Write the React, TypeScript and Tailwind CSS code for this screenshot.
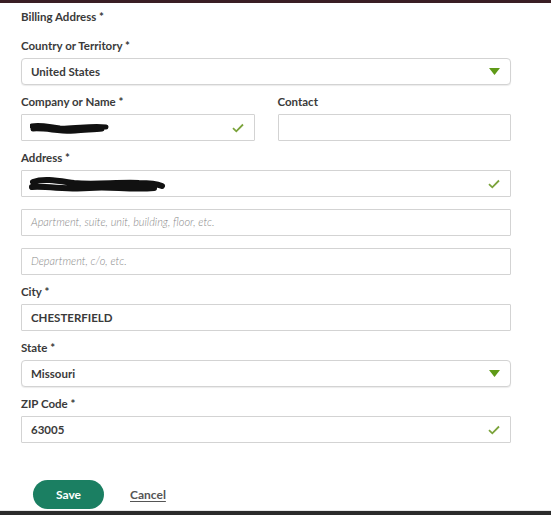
import * as React from 'react';

const font = { fontFamily: 'Lato, "Open Sans", "Liberation Sans", sans-serif' };

function Check() {
  return (
    <svg width="12" height="10" viewBox="0 0 12 10" className="shrink-0">
      <path d="M1 5.2 L4.3 8.3 L11 1.5" fill="none" stroke="#7ba33b" strokeWidth="1.8" />
    </svg>
  );
}

function Caret() {
  return (
    <svg width="11" height="7" viewBox="0 0 11 7" className="shrink-0">
      <path d="M0 0 H11 L5.5 7 Z" fill="#5f9a17" />
    </svg>
  );
}

function Label({ children }: { children: React.ReactNode }) {
  return <div className="text-[11.5px] leading-[14px] font-bold text-[#3a3a3a]">{children}</div>;
}

function Field(props: {
  value?: string;
  placeholder?: string;
  check?: boolean;
  select?: boolean;
  children?: React.ReactNode;
}) {
  return (
    <div
      className={`relative flex items-center h-[27px] bg-white border border-[#d3d3d3] pl-[9px] pr-[10px] ${
        props.select ? 'rounded-[4px] shadow-[0_1px_1px_rgba(0,0,0,0.08)]' : 'rounded-[1px]'
      }`}
    >
      {props.value ? (
        <span className="flex-1 text-[11.5px] font-bold text-[#3a3a3a]">{props.value}</span>
      ) : (
        <span className="flex-1 text-[11px] italic font-light text-[#8a8a8a]">{props.placeholder}</span>
      )}
      {props.children}
      {props.check && <Check />}
      {props.select && <Caret />}
    </div>
  );
}

export default function App() {
  return (
    <div className="w-[551px] h-[515px] bg-white flex flex-col overflow-hidden" style={font}>
      <div className="h-[3px] bg-[#3a1e24]" />
      <div className="flex-1 pl-[21px] w-[511px] pt-[7px]">
        <Label>Billing Address *</Label>

        <div className="mt-[15px]">
          <Label>Country or Territory *</Label>
          <div className="mt-[5px]">
            <Field value="United States" select />
          </div>
        </div>

        <div className="mt-[10px] grid grid-cols-2 gap-x-[23px]">
          <div>
            <Label>Company or Name *</Label>
            <div className="mt-[5px]">
              <Field value=" " check>
                <svg width="80" height="16" viewBox="0 0 80 16" className="absolute left-[8px] top-[5px]">
                  <path
                    d="M2 6 C10 4 20 7 30 8 C45 9 60 5 76 7 M3 9 C15 8 30 12 45 11 C55 10 65 10 72 9"
                    fill="none"
                    stroke="#111"
                    strokeWidth="5"
                    strokeLinecap="round"
                  />
                </svg>
              </Field>
            </div>
          </div>
          <div>
            <Label>Contact</Label>
            <div className="mt-[5px]">
              <Field placeholder="" />
            </div>
          </div>
        </div>

        <div className="mt-[10px]">
          <Label>Address *</Label>
          <div className="mt-[5px]">
            <Field value=" " check>
              <svg width="140" height="22" viewBox="0 0 140 22" className="absolute left-[7px] top-[3px]">
                <path
                  d="M4 8 C15 4 30 7 45 9 C65 11 90 8 110 9 C120 9 128 10 133 12 M3 13 C20 12 40 16 60 14 C80 12 100 16 125 14"
                  fill="none"
                  stroke="#111"
                  strokeWidth="6"
                  strokeLinecap="round"
                />
              </svg>
            </Field>
          </div>
        </div>

        <div className="mt-[12px]">
          <Field placeholder="Apartment, suite, unit, building, floor, etc." />
        </div>
        <div className="mt-[12px]">
          <Field placeholder="Department, c/o, etc." />
        </div>

        <div className="mt-[10px]">
          <Label>City *</Label>
          <div className="mt-[5px]">
            <Field value="CHESTERFIELD" />
          </div>
        </div>

        <div className="mt-[10px]">
          <Label>State *</Label>
          <div className="mt-[5px]">
            <Field value="Missouri" select />
          </div>
        </div>

        <div className="mt-[10px]">
          <Label>ZIP Code *</Label>
          <div className="mt-[5px]">
            <Field value="63005" check />
          </div>
        </div>

        <div className="mt-[37px] flex items-center">
          <button className="ml-[12px] w-[71px] h-[29px] rounded-full bg-[#1b7f62] text-white text-[12px] font-bold">
            Save
          </button>
          <a className="ml-[26px] text-[12px] font-bold text-[#555] underline underline-offset-2">Cancel</a>
        </div>
      </div>
      <div className="h-px bg-[#e8e8e8]" />
      <div className="h-[4px] bg-[#2b2b2b]" />
    </div>
  );
}
